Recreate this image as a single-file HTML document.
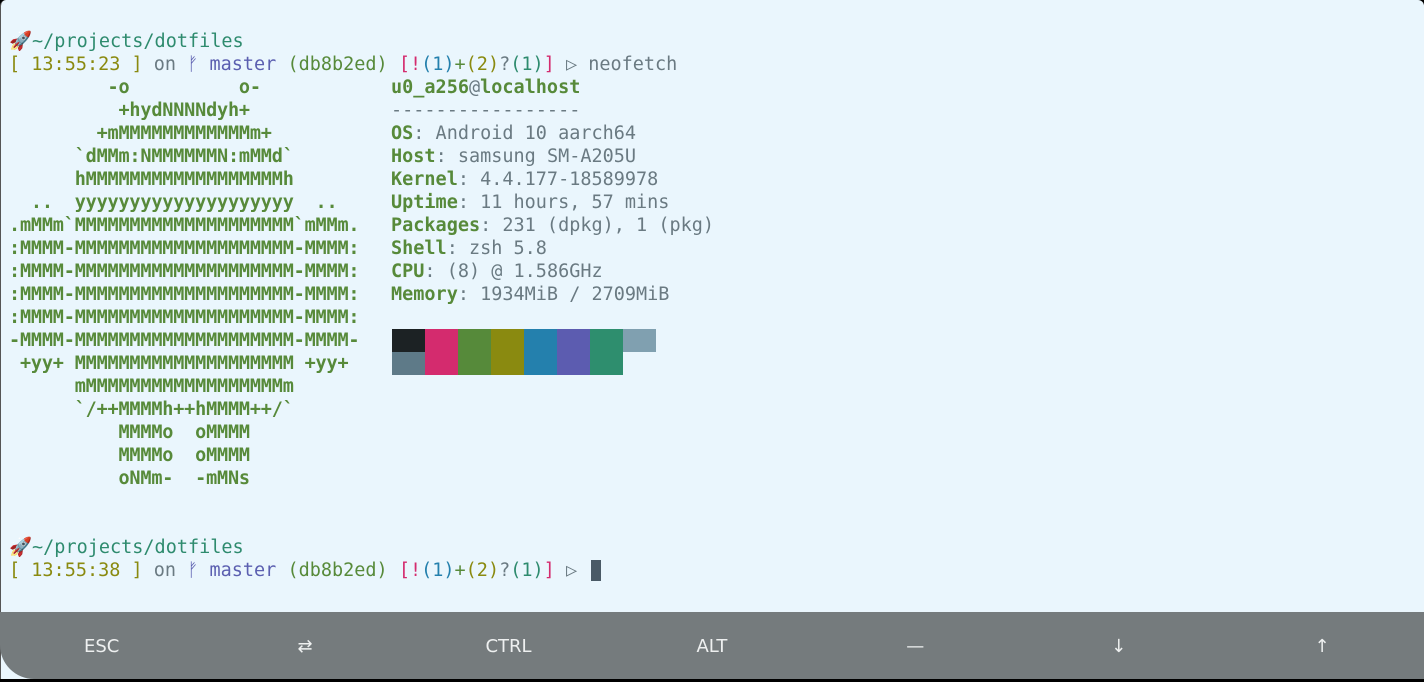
<!DOCTYPE html>
<html><head><meta charset="utf-8"><style>
html,body{margin:0;padding:0;width:1424px;height:679px;overflow:hidden;background:#000}
#scr{position:absolute;left:0;top:0;width:1424px;height:679px;background:#eaf6fd;border-radius:6px 6px 0 0;border-left:1px solid #555;box-sizing:border-box;overflow:hidden}
pre{margin:0;font-family:"DejaVu Sans Mono","Liberation Mono",monospace;font-size:18.5px;line-height:23px;white-space:pre;position:absolute}
.g{color:#578a3a}.t{color:#2e8b6e}.y{color:#8a8a10}.b{color:#5b5fb0}.gr{color:#6a7a82}.p{color:#d42b6e}.bl{color:#2480ad}
b{font-weight:bold}
.art{letter-spacing:-0.19px}
#bar{position:absolute;left:0;top:612px;width:1424px;height:67px;background:#757b7d;border-radius:0 0 0 34px}
#bar div{position:absolute;top:0;width:203.4px;height:67px;line-height:70px;text-align:center;color:#eef0f0;font-family:"DejaVu Sans","Liberation Sans",sans-serif;font-size:18px}
.blk{position:absolute;width:33px;height:23px}
</style></head><body>
<div id="scr">
<pre style="left:8px;top:30px"><span class="t">🚀~/projects/dotfiles</span>
<span class="y">[ 13:55:23 ]</span> <span class="gr">on</span> <span class="b">ᚠ master</span> <span class="g">(db8b2ed)</span> <span class="p">[</span><span class="p">!</span><span class="bl">(1)</span><span class="g">+</span><span class="y">(2)</span><span class="gr">?</span><span class="t">(1)</span><span class="p">]</span> <span class="gr">▷ neofetch</span>
<span class="g art"><b>         -o          o-
          +hydNNNNdyh+
        +mMMMMMMMMMMMMm+
      `dMMm:NMMMMMMN:mMMd`
      hMMMMMMMMMMMMMMMMMMh
  ..  yyyyyyyyyyyyyyyyyyyy  ..
.mMMm`MMMMMMMMMMMMMMMMMMMM`mMMm.
:MMMM-MMMMMMMMMMMMMMMMMMMM-MMMM:
:MMMM-MMMMMMMMMMMMMMMMMMMM-MMMM:
:MMMM-MMMMMMMMMMMMMMMMMMMM-MMMM:
:MMMM-MMMMMMMMMMMMMMMMMMMM-MMMM:
-MMMM-MMMMMMMMMMMMMMMMMMMM-MMMM-
 +yy+ MMMMMMMMMMMMMMMMMMMM +yy+
      mMMMMMMMMMMMMMMMMMMm
      `/++MMMMh++hMMMM++/`
          MMMMo  oMMMM
          MMMMo  oMMMM
          oNMm-  -mMNs</b></span>


<span class="t">🚀~/projects/dotfiles</span>
<span class="y">[ 13:55:38 ]</span> <span class="gr">on</span> <span class="b">ᚠ master</span> <span class="g">(db8b2ed)</span> <span class="p">[</span><span class="p">!</span><span class="bl">(1)</span><span class="g">+</span><span class="y">(2)</span><span class="gr">?</span><span class="t">(1)</span><span class="p">]</span> <span class="gr">▷</span></pre>
<pre style="left:390px;top:76px" class="gr"><b class="g">u0_a256</b><span class="gr">@</span><b class="g">localhost</b>
-----------------
<b class="g">OS</b>: Android 10 aarch64
<b class="g">Host</b>: samsung SM-A205U
<b class="g">Kernel</b>: 4.4.177-18589978
<b class="g">Uptime</b>: 11 hours, 57 mins
<b class="g">Packages</b>: 231 (dpkg), 1 (pkg)
<b class="g">Shell</b>: zsh 5.8
<b class="g">CPU</b>: (8) @ 1.586GHz
<b class="g">Memory</b>: 1934MiB / 2709MiB</pre>
<div style="position:absolute;left:590px;top:560px;width:10px;height:21px;background:#4a5a66"></div>
<div class="blk" style="left:391px;top:329px;background:#1c2224"></div>
<div class="blk" style="left:424px;top:329px;background:#d42b6e"></div>
<div class="blk" style="left:457px;top:329px;background:#568a3a"></div>
<div class="blk" style="left:490px;top:329px;background:#8a8a10"></div>
<div class="blk" style="left:523px;top:329px;background:#2480ad"></div>
<div class="blk" style="left:556px;top:329px;background:#5c5cb0"></div>
<div class="blk" style="left:589px;top:329px;background:#2e8e6e"></div>
<div class="blk" style="left:622px;top:329px;background:#80a0b0"></div>
<div class="blk" style="left:391px;top:352px;background:#5e7a88"></div>
<div class="blk" style="left:424px;top:352px;background:#d42b6e"></div>
<div class="blk" style="left:457px;top:352px;background:#568a3a"></div>
<div class="blk" style="left:490px;top:352px;background:#8a8a10"></div>
<div class="blk" style="left:523px;top:352px;background:#2480ad"></div>
<div class="blk" style="left:556px;top:352px;background:#5c5cb0"></div>
<div class="blk" style="left:589px;top:352px;background:#2e8e6e"></div>
</div>
<div id="bar">
<div style="left:0">ESC</div>
<div style="left:203.4px">⇄</div>
<div style="left:406.8px">CTRL</div>
<div style="left:610.2px">ALT</div>
<div style="left:813.6px">—</div>
<div style="left:1017px">↓</div>
<div style="left:1220.4px">↑</div>
</div>
</body></html>
